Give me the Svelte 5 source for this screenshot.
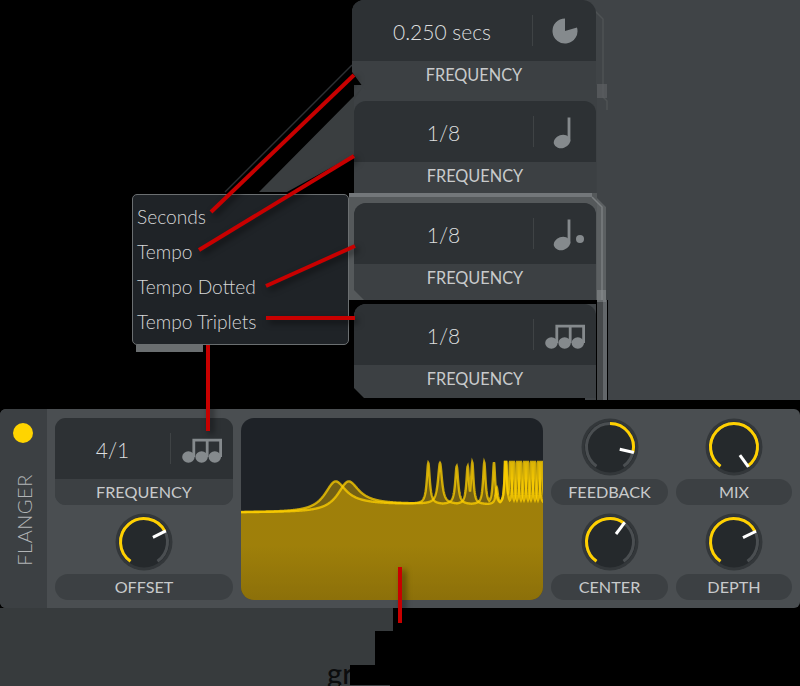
<script>
  const rad = (d) => ((d - 90) * Math.PI) / 180;
  const pt = (r, d) => [29 + r * Math.cos(rad(d)), 29 + r * Math.sin(rad(d))];
  function arc(from, to, r = 23.5) {
    const [x1, y1] = pt(r, from);
    const [x2, y2] = pt(r, to);
    const large = to - from > 180 ? 1 : 0;
    return `M${x1.toFixed(2)} ${y1.toFixed(2)}A${r} ${r} 0 ${large} 1 ${x2.toFixed(2)} ${y2.toFixed(2)}`;
  }
  function needle(d) {
    const [x1, y1] = pt(10, d);
    const [x2, y2] = pt(24.5, d);
    return `M${x1.toFixed(2)} ${y1.toFixed(2)}L${x2.toFixed(2)} ${y2.toFixed(2)}`;
  }

  const cards = [
    { value: '0.250 secs', icon: 'pie', cls: 'first' },
    { value: '1/8', icon: 'quarter', cls: 'second' },
    { value: '1/8', icon: 'dotted', cls: 'third' },
    { value: '1/8', icon: 'triplet', cls: 'fourth' }
  ];
  const menu = ['Seconds', 'Tempo', 'Tempo Dotted', 'Tempo Triplets'];
  const lines = [
    [211, 212, 354, 75],
    [199, 250, 354, 156],
    [266, 286, 355, 246],
    [266, 318, 355, 318],
    [208, 345, 208, 431],
    [400, 567, 400, 623]
  ];
  const rightKnobs = [
    { label: 'FEEDBACK', from: 0, to: 103 },
    { label: 'MIX', from: -145, to: 144 },
    { label: 'CENTER', from: -145, to: 37 },
    { label: 'DEPTH', from: -145, to: 64 }
  ];

  // response curves, in page pixels relative to the graph (origin 241,418)
  function curve(hump, peaks) {
    let d = '';
    for (let x = 241; x <= 544; x += 0.25) {
      const s = 1 / (1 + Math.exp(-(x - hump) / 8));
      let y = 512.5 - 8 * s;
      y -= (27 * 169) / (169 + (x - hump) * (x - hump));
      let top = 0;
      for (const [c, a, w] of peaks) {
        top = Math.max(top, (a * w * w) / (w * w + (x - c) * (x - c)));
      }
      y = Math.max(y - top, 462);
      d += `${d ? 'L' : 'M'}${x - 241} ${(y - 418).toFixed(2)}`;
    }
    return d;
  }
  const dense = (list) => list.map((c) => [c, 70, 0.9]);
  const peaksA = [[428.3, 41, 1.8], [456.7, 38, 1.8], [484.3, 42, 1.5], [494, 42, 1.4], [505.7, 60, 1.1], ...dense([513.5, 520.5, 527.5, 534.5, 541.5])];
  const peaksB = [[440, 41, 2.4], [467.7, 38, 1.6], [472.3, 42, 1.5], [496.7, 17, 1.4], [505.7, 60, 1.1], ...dense([510.5, 517.5, 524.5, 531.5, 538.5])];
  const lineA = curve(335, peaksA);
  const lineB = curve(348, peaksB);
  const fillA = `${lineA}L303 182L0 182Z`;
  const fillB = `${lineB}L303 182L0 182Z`;
</script>

{#snippet triplet()}
  <svg class="icon" width="41" height="28" viewBox="0 0 41 28">
    <path d="M11.8 5.2H38.6V22M25.2 5.2V22M11.8 3.8V22" class="beam" />
    <ellipse cx="6.4" cy="22" rx="6.2" ry="5.8" />
    <ellipse cx="19.6" cy="22" rx="6.2" ry="5.8" />
    <ellipse cx="32.8" cy="22" rx="6.2" ry="5.8" />
  </svg>
{/snippet}

{#snippet knob(from, to)}
  <svg class="knob" width="58" height="58" viewBox="0 0 58 58">
    <circle cx="29" cy="29" r="28.5" class="rim" />
    <circle cx="29" cy="29" r="25.5" class="cap" />
    <path d={arc(-145, 145)} class="track" />
    <path d={arc(from, to)} class="value" />
    <path d={needle(to)} class="needle" />
  </svg>
{/snippet}

<div class="page">
  <svg class="backdrop" width="800" height="686" viewBox="0 0 800 686">
    <rect x="585" y="0" width="215" height="400" fill="#404447" />
    <rect x="354" y="85" width="243" height="115" fill="#3d4144" />
    <polygon points="363,87 259,192 287,192 354,155 354,100" fill="#3a3e40" />
    <path d="M225 192L352 65" stroke="#2d3134" stroke-width="1.5" />
    <path d="M584 0L603 19V97L607 101V110" stroke="#4e5254" stroke-width="1.5" fill="none" />
    <rect x="597" y="84" width="10" height="14" fill="#5c6062" opacity="0.7" />
    <rect x="349" y="193" width="248" height="108" fill="#55595b" />
    <rect x="349" y="193" width="243" height="4" fill="#73777a" />
    <path d="M592 193L606 207V300H597V198Z" fill="#5c6062" />
    <path d="M592 197L602 207V300" stroke="#7a7e80" stroke-width="1.5" fill="none" />
    <rect x="349" y="300" width="259" height="4" fill="#000" />
    <rect x="596" y="300" width="12" height="100" fill="#000" />
    <rect x="597" y="300" width="6" height="100" fill="#45484a" />
    <rect x="603" y="300" width="4" height="100" fill="#63676a" />
    <rect x="597" y="290" width="9" height="12" fill="#8a8e90" opacity="0.5" />
    <rect x="136" y="345" width="67" height="7" fill="#6a6e70" />
  </svg>

  <div class="stack">
    {#each cards as card}
      <div class="card {card.cls}">
        <div class="readout">
          <span class="value-text">{card.value}</span>
          <span class="icon-box">
            {#if card.icon === 'pie'}
              <svg class="icon" width="28" height="28" viewBox="0 0 28 28">
                <path d="M14 14L14 1.5A12.5 12.5 0 1 0 26 10.5Z" />
              </svg>
            {:else if card.icon === 'quarter'}
              <svg class="icon" width="28" height="34" viewBox="0 0 28 34">
                <rect x="16.6" y="2.5" width="2.8" height="24" />
                <ellipse cx="11" cy="26.5" rx="8.4" ry="6.6" transform="rotate(-18 11 26.5)" />
              </svg>
            {:else if card.icon === 'dotted'}
              <svg class="icon" width="46" height="34" viewBox="0 0 46 34">
                <rect x="25.6" y="2.5" width="2.8" height="24" />
                <ellipse cx="20" cy="26.5" rx="8.4" ry="6.6" transform="rotate(-18 20 26.5)" />
                <circle cx="38" cy="22" r="4" />
              </svg>
            {:else}
              {@render triplet()}
            {/if}
          </span>
        </div>
        <div class="card-label">FREQUENCY</div>
      </div>
    {/each}
  </div>

  <ul class="menu">
    {#each menu as item}
      <li>{item}</li>
    {/each}
  </ul>

  <section class="panel">
    <div class="strip">
      <span class="led"></span>
      <span class="name">FLANGER</span>
    </div>
    <div class="left-col">
      <div class="freq">
        <div class="freq-read">
          <span class="value-text">4/1</span>
          <span class="icon-box">{@render triplet()}</span>
        </div>
        <div class="pill-label square">FREQUENCY</div>
      </div>
      <div class="knob-cell">
        {@render knob(-145, 63)}
        <div class="pill-label">OFFSET</div>
      </div>
    </div>
    <div class="graph">
      <svg width="302" height="182" viewBox="0 0 302 182">
        <defs>
          <linearGradient id="shade" x1="0" y1="0" x2="0" y2="1">
            <stop offset="0" stop-color="#ca9f00" stop-opacity="0.5" />
            <stop offset="0.6" stop-color="#ca9f00" stop-opacity="0.5" />
            <stop offset="1" stop-color="#b18a00" stop-opacity="0.5" />
          </linearGradient>
        </defs>
        <path d={fillA} fill="url(#shade)" />
        <path d={fillB} fill="url(#shade)" />
        <path d={lineA} class="trace" />
        <path d={lineB} class="trace" />
      </svg>
    </div>
    <div class="right-grid">
      {#each rightKnobs as k}
        <div class="knob-cell">
          {@render knob(k.from, k.to)}
          <div class="pill-label">{k.label}</div>
        </div>
      {/each}
    </div>
  </section>

  <div class="footer">
    <div class="foot-a"></div>
    <div class="foot-b"></div>
    <div class="foot-c"><span>gr</span></div>
  </div>
  <div class="rule"></div>

  <svg class="annotations" width="800" height="686" viewBox="0 0 800 686">
    {#each lines as [x1, y1, x2, y2]}
      <line {x1} {y1} {x2} {y2} />
    {/each}
  </svg>
</div>

<style>
  :global(body) {
    margin: 0;
    background: #000;
  }
  .page {
    position: relative;
    width: 800px;
    height: 686px;
    overflow: hidden;
    background: #000;
    font-family: Lato, 'Liberation Sans', sans-serif;
    padding-top: 409px;
    box-sizing: border-box;
  }
  .backdrop,
  .annotations {
    position: absolute;
    left: 0;
    top: 0;
  }
  .annotations {
    pointer-events: none;
    filter: drop-shadow(3px 3px 3px rgba(0, 0, 0, 0.55));
  }
  .annotations line {
    stroke: #c80000;
    stroke-width: 4;
  }

  /* floating cards */
  .stack {
    position: absolute;
    left: 354px;
    top: 0;
    width: 242px;
    display: flex;
    flex-direction: column;
  }
  .card {
    background: #3c4043;
    border-radius: 12px 12px 0 0;
    overflow: hidden;
  }
  .first {
    height: 90px;
    margin-left: -2px;
    border-radius: 12px 14px 0 14px;
    clip-path: polygon(0 0, 100% 0, 100% 100%, 13px 100%, 11px 87px, 0 72px);
  }
  .second {
    height: 92px;
    margin-top: 11px;
  }
  .third {
    height: 97px;
    margin-top: 10px;
    clip-path: polygon(0 0, 100% 0, 100% 100%, 10px 100%, 0 calc(100% - 10px));
  }
  .fourth {
    height: 94px;
    margin-top: 4px;
    clip-path: polygon(0 0, 100% 0, 100% 100%, 10px 100%, 0 calc(100% - 10px));
  }
  .readout {
    height: 61px;
    background: #2d3134;
    display: flex;
    align-items: center;
  }
  .readout .value-text {
    flex: 1;
  }
  .first .readout .icon-box {
    width: 64px;
  }
  .value-text {
    text-align: center;
    font-size: 21px;
    font-weight: 300;
    color: #dcdedf;
    padding-top: 1px;
  }
  .icon-box {
    width: 63px;
    height: 31px;
    box-sizing: border-box;
    border-left: 1px solid #3f4345;
    display: flex;
    align-items: center;
    justify-content: center;
  }
  .icon {
    fill: #858a8d;
    flex: none;
  }
  .icon .beam {
    fill: none;
    stroke: #858a8d;
    stroke-width: 2.8;
  }
  .card-label {
    height: 27px;
    line-height: 27px;
    text-align: center;
    font-size: 16.3px;
    color: #c8cacb;
  }

  /* menu */
  .menu {
    position: absolute;
    left: 132px;
    top: 194px;
    width: 217px;
    height: 151px;
    box-sizing: border-box;
    margin: 0;
    padding: 4px 0 0 4px;
    list-style: none;
    background: #1f2327;
    border: 1px solid #6b6f71;
    border-radius: 5px;
  }
  .menu li {
    height: 35px;
    line-height: 35px;
    font-size: 19.2px;
    font-weight: 300;
    color: #d6d7d8;
  }

  /* panel */
  .panel {
    position: relative;
    height: 199px;
    background: #4a4e51;
    border-radius: 6px;
    display: flex;
    overflow: hidden;
  }
  .strip {
    width: 47px;
    height: 100%;
    background: #3c4043;
    position: relative;
    flex: none;
  }
  .led {
    position: absolute;
    left: 13px;
    top: 14px;
    width: 20px;
    height: 20px;
    border-radius: 50%;
    background: #ffd400;
  }
  .name {
    position: absolute;
    left: 24px;
    top: 111px;
    transform: translate(-50%, -50%) rotate(-90deg);
    font-size: 20px;
    font-weight: 300;
    letter-spacing: 0.5px;
    color: #b2b5b7;
    white-space: nowrap;
  }
  .left-col {
    width: 178px;
    margin: 9px 0 8px 8px;
    display: grid;
    grid-template-rows: 87px 87px;
    row-gap: 8px;
    flex: none;
  }
  .freq {
    border-radius: 11px;
    overflow: hidden;
    background: #3c4043;
  }
  .freq-read {
    height: 61px;
    background: #2d3134;
    display: flex;
    align-items: center;
    justify-content: flex-end;
  }
  .freq-read .value-text {
    flex: 1;
  }
  .knob-cell {
    display: flex;
    flex-direction: column;
    align-items: center;
    gap: 3px;
  }
  .knob {
    flex: none;
  }
  .pill-label {
    width: 100%;
    height: 26px;
    line-height: 26px;
    border-radius: 13px;
    background: #3c4043;
    text-align: center;
    font-size: 16.2px;
    color: #c8cacb;
  }
  .pill-label.square {
    border-radius: 0;
  }
  .rim {
    fill: #33373a;
  }
  .cap {
    fill: #25292c;
  }
  .track,
  .value {
    fill: none;
    stroke-width: 3;
  }
  .track {
    stroke: #4a4e51;
  }
  .value {
    stroke: #ffd000;
  }
  .needle {
    stroke: #fff;
    stroke-width: 3;
    fill: none;
  }
  .graph {
    width: 302px;
    height: 182px;
    margin: 9px 8px 8px 8px;
    border-radius: 13px;
    overflow: hidden;
    background: #1e2227;
    flex: none;
  }
  .graph svg {
    display: block;
  }
  .trace {
    fill: none;
    stroke: #ffd000;
    stroke-width: 2.4;
    opacity: 0.75;
  }
  .right-grid {
    width: 241px;
    margin-top: 9px;
    display: grid;
    grid-template-columns: 117px 116px;
    grid-template-rows: 87px 87px;
    column-gap: 8px;
    row-gap: 8px;
    flex: none;
  }

  /* area under the panel */
  .footer {
    display: flex;
    flex-direction: column;
  }
  .foot-a {
    width: 393px;
    height: 23px;
    background: #373b3d;
  }
  .foot-b {
    width: 375px;
    height: 34px;
    background: #373b3d;
  }
  .foot-c {
    width: 350px;
    height: 21px;
    background: #373b3d;
    overflow: hidden;
    position: relative;
  }
  .foot-c span {
    position: absolute;
    left: 327px;
    top: -7px;
    font-size: 29px;
    line-height: 29px;
    font-weight: 500;
    color: #0c0d0e;
  }
  .rule {
    position: absolute;
    left: 340px;
    top: 685px;
    width: 50px;
    height: 1px;
    background: #3f4345;
  }
</style>
